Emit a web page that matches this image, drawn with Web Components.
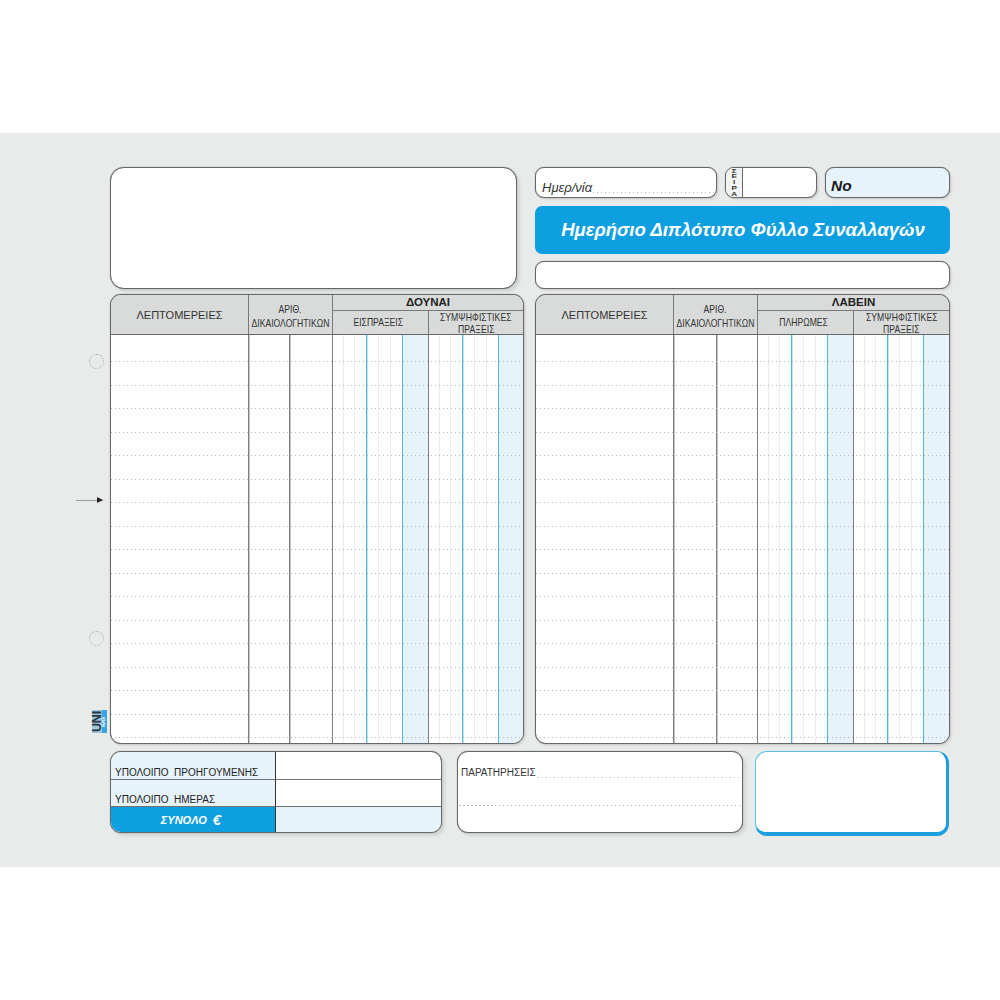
<!DOCTYPE html>
<html lang="el"><head><meta charset="utf-8"><title>Ημερήσιο Διπλότυπο Φύλλο Συναλλαγών</title>
<style>
html,body{margin:0;background:#fff;font-family:"Liberation Sans",Arial,sans-serif;color:#222}
body{width:1000px;height:1000px;overflow:hidden}
</style></head><body>
<form-sheet>
  <plain-box slot="top-left"></plain-box>
  <form-head slot="top-right"></form-head>
  <ledger-table slot="left" title-text="ΔΟΥΝΑΙ" first="ΕΙΣΠΡΑΞΕΙΣ" style="width:414px" cols="137 41 43 96 96"></ledger-table>
  <ledger-table slot="right" title-text="ΛΑΒΕΙΝ" first="ΠΛΗΡΩΜΕΣ" style="width:415px" cols="137 43 41 96 97"></ledger-table>
  <balance-box slot="bottom"></balance-box>
  <notes-box slot="bottom"></notes-box>
  <stamp-box slot="bottom"></stamp-box>
  <margin-marks slot="marks"></margin-marks>
</form-sheet>
<script>
const def=(n,html,init)=>customElements.define(n,class extends HTMLElement{
  connectedCallback(){ if(this.shadowRoot)return; const r=this.attachShadow({mode:'open'}); r.innerHTML=typeof html==='function'?html(this):html; init&&init(r,this);}
});
const BOX=`border:1px solid #666968;border-radius:11px;background:#fff;box-sizing:border-box;box-shadow:0 0 1px #666968,3px 3px 3px #d3d6d5;`;
const DOT=`repeating-linear-gradient(90deg,#b9bbbb 0 1.5px,transparent 1.5px 4px)`;

def('form-sheet',`<style>
:host{display:block;margin-top:133px;height:734px;background:#e9ebea;box-sizing:border-box;padding:34px 50px 0 110px;position:relative}
.top{display:grid;grid-template-columns:407px 415px;column-gap:18px}
.mid{display:flex;gap:11px;margin-top:5px}
.bot{display:flex;margin-top:7px;align-items:flex-start}
</style>
<div class="top"><slot name="top-left"></slot><slot name="top-right"></slot></div>
<div class="mid"><slot name="left"></slot><slot name="right"></slot></div>
<div class="bot"><slot name="bottom"></slot></div>
<slot name="marks"></slot>`);

def('plain-box',`<style>:host{display:block;height:122px;${BOX}border-radius:14px}</style>`);

def('form-head',`<style>
:host{display:flex;flex-direction:column;height:122px}
.row{display:flex;height:31px;gap:8px}
.b{border:1px solid #666968;border-radius:9px;background:#fff;box-sizing:border-box;box-shadow:0 0 1px #666968,2px 2px 2px #d8dad9}
.date{width:182px;display:flex;align-items:flex-end;padding:0 2px 1px 6px;font:italic 13px/16px "Liberation Sans",sans-serif;color:#333}
.date span{flex:1;height:1px;margin:0 0 3px 1px;background:${DOT}}
.ser{width:92px;display:flex;overflow:hidden}
.ser i{width:17px;border-right:1px solid #666968;box-sizing:border-box;background:#f2f3f3;display:flex;justify-content:center;padding-left:1px}
.ser span{display:block;font:bold 6px/5.8px "Liberation Sans",sans-serif;text-align:center;color:#333;white-space:pre-line;transform:scaleX(1.35);margin-top:.5px}
.no{width:125px;background:#e6f3fb;font:italic bold 15.5px "Liberation Sans",sans-serif;color:#1a1a1a;padding:9px 0 0 5px}
.banner{margin-top:8px;height:48px;border-radius:7px;background:#0e9fe0;color:#fff;font:italic bold 18.5px/47.5px "Liberation Sans",sans-serif;text-align:center;padding-left:1px;box-sizing:border-box}
.blank{margin-top:7px;height:28px;border-radius:9px}
</style>
<div class="row"><div class="b date">Ημερ/νία<span></span></div><div class="b ser"><i><span>Σ
Ε
Ι
Ρ
Α</span></i></div><div class="b no">No</div></div>
<div class="banner">Ημερήσιο Διπλότυπο Φύλλο Συναλλαγών</div>
<div class="b blank"></div>`);

def('ledger-table',el=>{
  const c=el.getAttribute('cols').split(' ').map(Number);
  const gt=c.map(x=>x+'px').join(' ');
  const amount=()=>`<div class="amt"><s></s><s></s><s class="k"></s><s></s><s></s><s class="k"></s><s class="sh"></s></div>`;
  let rows='';for(let i=0;i<17;i++)rows+='<u></u>';
  return `<style>
:host{display:block;height:450px;box-sizing:border-box;border:1px solid #666968;border-radius:11px;background:#fff;overflow:hidden;box-shadow:0 0 1px #666968,2px 2px 2px #d8dad9}
.head{display:grid;grid-template-columns:${c[0]}px ${c[1]+c[2]}px ${c[3]}px 1fr;grid-template-rows:16px 23px;height:39px;background:#d9dbda;border-bottom:1px solid #666968;color:#333;text-align:center}
.cell{display:flex;flex-direction:column;align-items:center;min-width:0}
.n{display:block;white-space:nowrap;transform:scaleX(.82)}
.d{grid-row:1/3;line-height:40px;font-size:11px}
.a{grid-row:1/3;border-left:1px solid #777a79;line-height:13.5px;padding-top:8px;font-size:10.5px;box-sizing:border-box}
.t{grid-column:3/5;border-left:1px solid #777a79;border-bottom:1px solid #777a79;font-weight:bold;color:#222;line-height:15px;font-size:11.5px}
.s{border-left:1px solid #777a79;font-size:10.5px;line-height:23px;padding-right:4px;box-sizing:border-box}
.s2{border-left:1px solid #777a79;font-size:10.5px;line-height:12px;letter-spacing:.1px}
.body{position:relative;height:410px;display:grid;grid-template-columns:${gt}}
.col{border-left:1px solid #7d7f7e;box-shadow:inset 1px 0 0 #c4c6c5;box-sizing:border-box}
.col:first-child{border:0;box-shadow:none}
.amt{display:grid;grid-template-columns:11px 11px 12px 12px 12px 12px 1fr;border-left:1px solid #7d7f7e;box-sizing:border-box}
.amt s{display:block;border-right:1px solid #eceded;text-decoration:none}
.amt s.k{border-right:1px solid #4db4dc;box-shadow:1px 0 0 #c5e7f4}
.amt s.sh{background:#e7f3fb;border:0}
.dots{position:absolute;inset:0;display:flex;flex-direction:column;padding-top:26px;gap:22.5px}
.dots u{display:block;height:1px;background:${DOT};text-decoration:none}
</style>
<div class="head"><div class="cell d"><span class="n" style="transform:none">ΛΕΠΤΟΜΕΡΕΙΕΣ</span></div><div class="cell a"><span class="n">ΑΡΙΘ.</span><span class="n">ΔΙΚΑΙΟΛΟΓΗΤΙΚΩΝ</span></div><div class="cell t"><span class="n" style="transform:none">${el.getAttribute('title-text')}</span></div><div class="cell s"><span class="n">${el.getAttribute('first')}</span></div><div class="cell s2"><span class="n">ΣΥΜΨΗΦΙΣΤΙΚΕΣ</span><span class="n">ΠΡΑΞΕΙΣ</span></div></div>
<div class="body"><div class="col"></div><div class="col"></div><div class="col"></div>${amount()}${amount()}<div class="dots">${rows}</div></div>`;
});

def('balance-box',`<style>
:host{display:grid;width:332px;margin-right:15px;grid-template-columns:165px 1fr;grid-template-rows:28px 27px 1fr;height:82px;${BOX}overflow:hidden}
.l{background:#e6f3fb;font-size:10px;color:#222;display:flex;align-items:flex-end;padding:0 0 0 4px;white-space:pre;border-bottom:1px solid #6f7271;border-right:1px solid #333;line-height:13px}
.r{border-bottom:1px solid #6f7271}
.tot{background:#0e9fe0;color:#fff;font:italic bold 11px/26px "Liberation Sans",sans-serif;padding-right:4px;display:flex;justify-content:center;align-items:center;gap:6px;border-right:1px solid #333}
.sum{background:#e6f3fb}
b{font-size:15px;font-weight:bold}
</style>
<div class="l">ΥΠΟΛΟΙΠΟ  ΠΡΟΗΓΟΥΜΕΝΗΣ</div><div class="r"></div>
<div class="l">ΥΠΟΛΟΙΠΟ  ΗΜΕΡΑΣ</div><div class="r"></div>
<div class="tot">ΣΥΝΟΛΟ <b>€</b></div><div class="sum"></div>`);

def('notes-box',`<style>
:host{display:block;width:286px;margin-right:12px;height:82px;${BOX}padding-top:14px;font-size:10px;color:#333}
.a{display:flex;align-items:flex-end;padding:0 1px 0 3px;height:12px;white-space:nowrap}
.a span{flex:1;height:1px;margin:0 0 0 2px;background:${DOT}}
.l{height:1px;margin:27px 1px 0;background:${DOT}}
</style>
<div class="a">ΠΑΡΑΤΗΡΗΣΕΙΣ<span></span></div><div class="l"></div>`);

def('stamp-box',`<style>
:host{display:block;width:194px;height:85px;box-sizing:border-box;background:#fff;border:1px solid #5cbde2;border-right:3px solid #1c9fdc;border-bottom:4px solid #1c9fdc;border-radius:12px}
</style>`);

def('margin-marks',`<style>
:host{display:block}
.h{position:absolute;left:89px;width:15px;height:15px;box-sizing:border-box;border:1px dotted #a9abaa;border-radius:50%}
.ar{position:absolute;left:76px;top:367px;width:27px;height:1px;background:#9a9c9b}
.ar::after{content:"";position:absolute;right:0;top:-3px;border-left:6px solid #222;border-top:3.5px solid transparent;border-bottom:3.5px solid transparent}
.uni{position:absolute;left:92px;top:577px;width:15px;height:23px;background:#9cc7e0;display:flex}
.uni b{writing-mode:vertical-rl;transform:rotate(180deg);font:bold 12.5px/10px "Liberation Sans",sans-serif;color:#2b3640;width:10px;text-align:center;letter-spacing:-.2px}
.uni i{flex:1;background:#3aa5dd;font:bold 3px/5px "Liberation Sans",sans-serif;color:#fff;writing-mode:vertical-rl;transform:rotate(180deg);text-align:center}
</style>
<div class="h" style="top:221px"></div><div class="h" style="top:498px"></div><div class="ar"></div>
<div class="uni"><b>UNI</b><i>PAPER</i></div>`);
</script>
</body></html>
